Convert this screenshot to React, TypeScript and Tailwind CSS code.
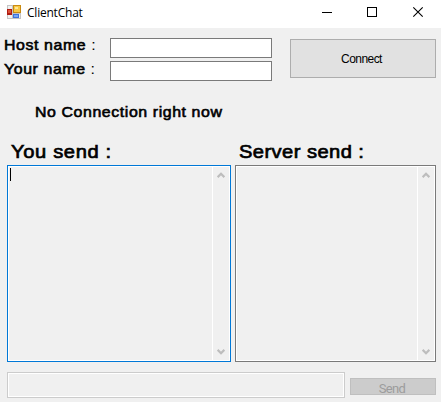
import React from "react";

const labelFont = "font-['Liberation_Sans',Arial,sans-serif] text-black whitespace-pre origin-left";

function AppIcon() {
  return (
    <svg width="14" height="14" viewBox="0 0 14 14" className="shrink-0" shapeRendering="crispEdges">
      <rect width="14" height="14" fill="#c4c4c4" />
      <rect x="1" y="1" width="4" height="3" fill="#f0f0f0" />
      <rect x="1" y="10" width="4" height="3" fill="#f0f0f0" />
      <rect x="11" y="9" width="2" height="4" fill="#f0f0f0" />
      <rect x="0" y="4" width="5" height="6" fill="#b01c12" />
      <rect x="1" y="5" width="3" height="3" fill="#dc5138" />
      <rect x="6" y="0" width="8" height="8" fill="#c98a12" />
      <rect x="7" y="1" width="6" height="6" fill="#f8c843" />
      <rect x="8" y="2" width="3" height="2" fill="#ffe79a" />
      <rect x="6" y="9" width="6" height="4" fill="#3d72dc" />
      <rect x="7" y="10" width="4" height="2" fill="#78a7f5" />
    </svg>
  );
}

function TitleBar() {
  return (
    <header className="flex h-[28px] items-start bg-white pl-[7px] pt-[5px]">
      <AppIcon />
      <span className="ml-[6px] w-[294px] font-['Open_Sans',sans-serif] text-[12px] leading-[16px] tracking-[-0.22px] text-black">
        ClientChat
      </span>
      <svg width="120" height="16" viewBox="321 4 120 16" fill="none" stroke="#000" className="-mt-px shrink-0">
        <path d="M322 12.5h10" shapeRendering="crispEdges" />
        <rect x="367.5" y="7.5" width="9" height="9" shapeRendering="crispEdges" />
        <path d="M413.3 7.3l9.4 9.4M422.7 7.3l-9.4 9.4" strokeWidth="1.1" />
      </svg>
    </header>
  );
}

function Chevron({ down = false }: { down?: boolean }) {
  return (
    <svg width="8" height="7" viewBox="0 0 8 7" fill="none" className={down ? "rotate-180" : ""}>
      <path d="M.6 5.2L4 1.8l3.4 3.4" stroke="#bdbdbd" strokeWidth="2.3" />
    </svg>
  );
}

function MessageBox({ focused = false }: { focused?: boolean }) {
  return (
    <div className={focused ? "flex h-[197px] w-[224px] border border-[#0078d7] p-px bg-white" : "flex h-[197px] w-[201px] border border-[#7a7a7a] p-px bg-white"}>
      <div className="flex-1 bg-[#f0f0f0] pl-px pt-px">
        {focused && <div className="h-[13px] w-px bg-black" />}
      </div>
      <div className="ml-px flex w-[16px] flex-col items-center justify-between bg-[#f0f0f0] pb-[5px] pt-[5px]">
        <Chevron />
        <Chevron down />
      </div>
    </div>
  );
}

export default function App() {
  return (
    <main className="h-[402px] w-[441px] overflow-hidden bg-[#f0f0f0]">
      <TitleBar />
      <section className="flex h-[65px]">
        <div className="w-[110px] shrink-0 pl-[4px] pt-[8px]">
          <div className={`${labelFont} h-[24px] w-[90px] scale-x-[1.06] text-[15px] leading-[18px] tracking-[0.55px]`}>
            <span className="[-webkit-text-stroke:0.6px_black]">Host name</span> :
          </div>
          <div className={`${labelFont} h-[24px] w-[90px] scale-x-[1.06] text-[15px] leading-[18px] tracking-[0.55px]`}>
            <span className="[-webkit-text-stroke:0.6px_black]">Your name</span> :
          </div>
        </div>
        <div className="flex w-[162px] shrink-0 flex-col gap-[3px] pt-[10px]">
          <input aria-label="Host name" className="h-[20px] w-full rounded-none border border-[#7a7a7a] bg-white px-1 text-xs outline-none" />
          <input aria-label="Your name" className="h-[20px] w-full rounded-none border border-[#7a7a7a] bg-white px-1 text-xs outline-none" />
        </div>
        <button className="ml-[18px] mt-[11px] h-[39px] w-[146px] border border-[#adadad] bg-[#e1e1e1] pr-[3px] font-['Liberation_Sans',Arial,sans-serif] text-[12px] tracking-[-0.55px] text-black">
          Connect
        </button>
      </section>
      <div className="h-[44px] pl-[35px] pt-[10px]">
        <div className={`${labelFont} w-[180px] scale-x-[1.06] text-[15px] leading-[18px] tracking-[0.55px] [-webkit-text-stroke:0.6px_black]`}>
          No Connection right now
        </div>
      </div>
      <section className="flex gap-[4px] pl-[7px]">
        <div className="w-[224px]">
          <h2 className={`${labelFont} ml-[4px] h-[28px] w-[150px] scale-x-[1.06] pt-[4px] text-[19px] leading-[22px] tracking-[0.6px] [-webkit-text-stroke:0.7px_black]`}>You send :</h2>
          <MessageBox focused />
        </div>
        <div className="w-[201px]">
          <h2 className={`${labelFont} ml-[4px] h-[28px] w-[150px] scale-x-[1.06] pt-[4px] text-[19px] leading-[22px] tracking-[0.4px] [-webkit-text-stroke:0.7px_black]`}>Server send :</h2>
          <MessageBox />
        </div>
      </section>
      <footer className="flex gap-[5px] pl-[7px] pt-[10px]">
        <div className="h-[26px] w-[338px] border border-[#cccccc] bg-white p-px">
          <div className="h-full bg-[#f0f0f0]" />
        </div>
        <button disabled className="mt-[6px] flex h-[17px] w-[86px] items-center justify-center border border-[#bfbfbf] bg-[#cccccc] pt-[4px] pr-[2px] font-['Roboto',sans-serif] text-[13px] leading-[14px] tracking-[-0.9px] text-[#9c9c9c]">
          <span className="tracking-[-0.7px]">Send</span>
        </button>
      </footer>
    </main>
  );
}
